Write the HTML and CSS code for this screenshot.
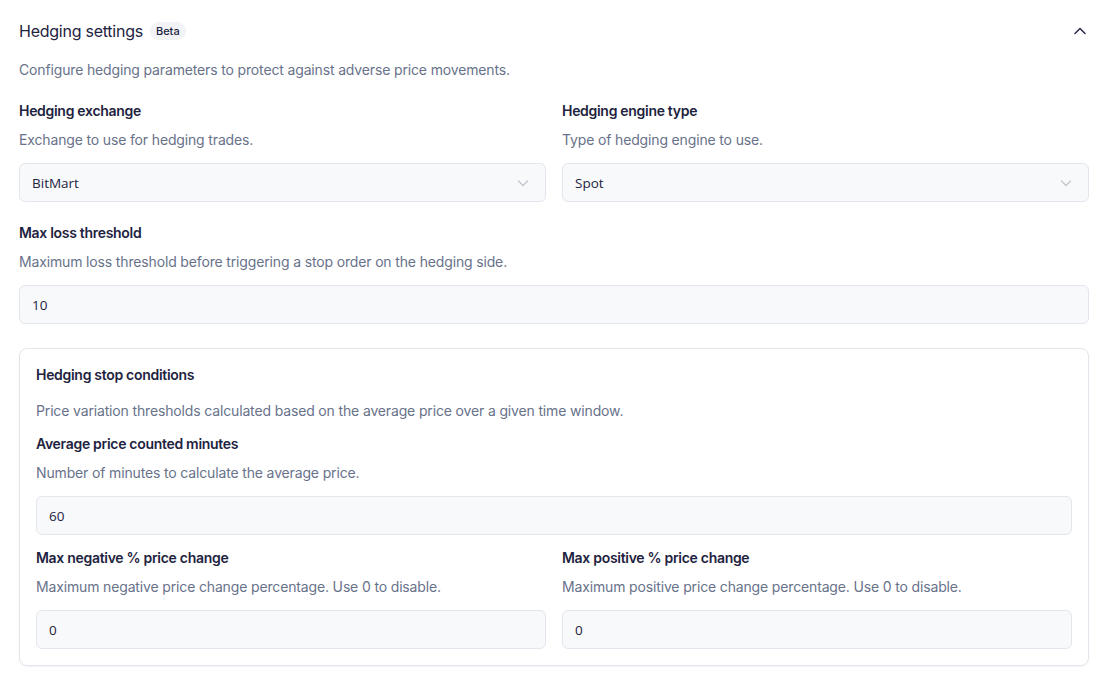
FILE: index.html
```html
<!DOCTYPE html>
<html>
<head>
<meta charset="utf-8">
<link rel="stylesheet" href="styles.css">
</head>
<body>
<section class="panel">
  <header class="panel-head">
    <div class="title-wrap">
      <h2 class="title">Hedging settings</h2>
      <span class="badge">Beta</span>
    </div>
    <svg class="chev-up" width="16" height="16" viewBox="0 0 16 16"><path d="M3 10.5l5-5 5 5" fill="none" stroke="#1e2340" stroke-width="1.4" stroke-linecap="round" stroke-linejoin="round"/></svg>
  </header>
  <p class="desc">Configure hedging parameters to protect against adverse price movements.</p>

  <div class="row two">
    <div class="field">
      <div class="label">Hedging exchange</div>
      <div class="help">Exchange to use for hedging trades.</div>
      <div class="input select"><span>BitMart</span>
        <svg width="16" height="16" viewBox="0 0 16 16"><path d="M3.5 6l4.5 4.5 4.5-4.5" fill="none" stroke="#c2c6ce" stroke-width="1.3" stroke-linecap="round" stroke-linejoin="round"/></svg>
      </div>
    </div>
    <div class="field">
      <div class="label">Hedging engine type</div>
      <div class="help">Type of hedging engine to use.</div>
      <div class="input select"><span>Spot</span>
        <svg width="16" height="16" viewBox="0 0 16 16"><path d="M3.5 6l4.5 4.5 4.5-4.5" fill="none" stroke="#c2c6ce" stroke-width="1.3" stroke-linecap="round" stroke-linejoin="round"/></svg>
      </div>
    </div>
  </div>

  <div class="row">
    <div class="field">
      <div class="label">Max loss threshold</div>
      <div class="help">Maximum loss threshold before triggering a stop order on the hedging side.</div>
      <div class="input"><span>10</span></div>
    </div>
  </div>

  <div class="card">
    <div class="card-title">Hedging stop conditions</div>
    <div class="card-desc">Price variation thresholds calculated based on the average price over a given time window.</div>
    <div class="crow">
      <div class="field">
        <div class="label">Average price counted minutes</div>
        <div class="help">Number of minutes to calculate the average price.</div>
        <div class="input"><span>60</span></div>
      </div>
    </div>
    <div class="crow two">
      <div class="field">
        <div class="label">Max negative % price change</div>
        <div class="help">Maximum negative price change percentage. Use 0 to disable.</div>
        <div class="input"><span>0</span></div>
      </div>
      <div class="field">
        <div class="label">Max positive % price change</div>
        <div class="help">Maximum positive price change percentage. Use 0 to disable.</div>
        <div class="input"><span>0</span></div>
      </div>
    </div>
  </div>
</section>
</body>
</html>
```

FILE: styles.css
```css
* { box-sizing: border-box; }
html, body { margin: 0; padding: 0; background: #ffffff; }
body {
  font-family: "Inter", "Liberation Sans", sans-serif;
  color: #1e2340;
}
.panel {
  padding: 19px 20px 10px 19px;
  width: 1109px;
}
.panel-head {
  display: flex;
  align-items: center;
  justify-content: space-between;
  height: 24px;
}
.title-wrap { display: flex; align-items: center; gap: 7px; }
.title {
  margin: 0;
  font-size: 16px;
  font-weight: 400;
  line-height: 24px;
  color: #1e2340;
  letter-spacing: -0.25px;
}
.badge {
  display: inline-block;
  background: #f1f3f7;
  border-radius: 10px;
  font-size: 11px;
  line-height: 18px;
  padding: 0 6px;
  color: #1e2340;
  font-weight: 500;
}
.chev-up { margin-right: 1px; }
.desc {
  margin: 17px 0 0 0;
  font-size: 14px;
  line-height: 20px;
  color: #68728a;
  letter-spacing: -0.15px;
}
.row { margin-top: 21px; }
.row + .row { margin-top: 21px; }
.two {
  display: grid;
  grid-template-columns: 1fr 1fr;
  column-gap: 16px;
}
.label {
  font-size: 14px;
  font-weight: 600;
  line-height: 20px;
  color: #1e2340;
  letter-spacing: -0.3px;
}
.help {
  margin-top: 9px;
  font-size: 14px;
  line-height: 20px;
  color: #68728a;
  letter-spacing: -0.15px;
}
.input {
  margin-top: 13px;
  height: 39px;
  border: 1px solid #e3e6ec;
  border-radius: 6px;
  background: #f8f9fb;
  display: flex;
  align-items: center;
  justify-content: space-between;
  padding: 0 12px 0 12px;
  font-family: "Open Sans", "Noto Sans", sans-serif;
  font-size: 13.5px;
  color: #1e2340;
}
.select svg { margin-right: 2px; }
.card {
  margin-top: 24px;
  border: 1px solid #e3e6ec;
  border-radius: 8px;
  box-shadow: 0 1px 2px rgba(20, 30, 60, 0.06);
  padding: 16px 16px 16px 16px;
}
.card-title {
  font-size: 14px;
  font-weight: 600;
  line-height: 20px;
  letter-spacing: -0.3px;
}
.card-desc {
  margin-top: 16px;
  font-size: 14px;
  line-height: 20px;
  color: #68728a;
  letter-spacing: -0.15px;
}
.crow { margin-top: 13px; }
.crow + .crow { margin-top: 13px; }
```
